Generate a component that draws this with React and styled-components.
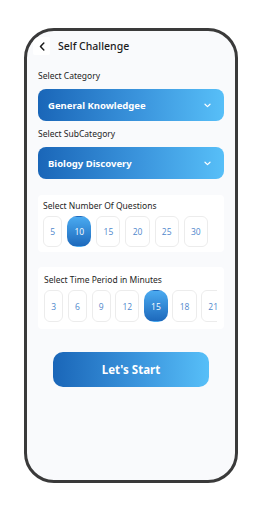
import React from 'react'
import styled, { createGlobalStyle } from 'styled-components'

const Global = createGlobalStyle`
  body {
    margin: 0;
    background: #ffffff;
    font-family: "Noto Sans", "Open Sans", sans-serif;
  }
`

const Phone = styled.div`
  width: 214px;
  height: 455px;
  box-sizing: border-box;
  margin: 28px 0 0 24px;
  border: 3px solid #3a3a3a;
  border-radius: 30px;
  background: #f9fafc;
  overflow: hidden;
  display: flex;
  flex-direction: column;
`

const Header = styled.div`
  display: flex;
  align-items: center;
  padding: 6px 0 0 6px;
`

const BackBtn = styled.div`
  width: 17px;
  height: 18px;
  background: #ffffff;
  border-radius: 2px;
  display: flex;
  align-items: center;
  justify-content: center;
`

const Title = styled.div`
  margin-left: 8px;
  font-size: 10.5px;
  font-weight: 500;
  color: #1c1c1c;
`

const Body = styled.div`
  padding: 0 11px;
  display: flex;
  flex-direction: column;
`

const Label = styled.div`
  margin-top: ${p => p.top}px;
  font-size: 8.5px;
  line-height: 12px;
  color: #1e1e1e;
`

const Dropdown = styled.div`
  margin-top: 7px;
  height: 32px;
  border-radius: 8px;
  background: linear-gradient(90deg, #1a66b8 0%, #3b95dd 55%, #57bff8 100%);
  display: flex;
  align-items: center;
  justify-content: space-between;
  padding: 0 13px 0 10px;
  color: #fff;
  font-size: 9.5px;
  font-weight: 700;
`

const Card = styled.div`
  margin-top: ${p => p.top}px;
  background: #ffffff;
  border-radius: 4px;
  padding: ${p => p.pad};
`

const CardTitle = styled.div`
  font-size: 8.5px;
  line-height: 12px;
  color: #1e1e1e;
`

const ChipRow = styled.div`
  margin-top: 4px;
  display: flex;
  gap: ${p => p.gap}px;
  overflow: hidden;
`

const Chip = styled.div`
  flex: none;
  height: ${p => p.h}px;
  box-sizing: border-box;
  padding: 0 6.2px;
  display: flex;
  align-items: center;
  justify-content: center;
  font-family: "Open Sans", sans-serif;
  font-size: 8.5px;
  border-radius: ${p => (p.active ? 10 : 6)}px;
  border: 1px solid ${p => (p.active ? 'transparent' : '#ececec')};
  background: ${p => (p.active ? 'linear-gradient(180deg, #4aaaf0 0%, #1d69bc 100%)' : '#ffffff')};
  color: ${p => (p.active ? '#ffffff' : '#4f87cc')};
`

const StartBtn = styled.div`
  margin: 23px auto 0;
  width: 156px;
  height: 35px;
  border-radius: 10px;
  background: linear-gradient(90deg, #1a66b8 0%, #3b95dd 55%, #57bff8 100%);
  display: flex;
  align-items: center;
  justify-content: center;
  color: #fff;
  font-size: 11.5px;
  font-weight: 700;
`

const Chevron = () => (
  <svg width="7" height="5" viewBox="0 0 7 5">
    <path d="M1 1.2 L3.5 3.6 L6 1.2" fill="none" stroke="#fff" strokeWidth="1.2" strokeLinecap="round" strokeLinejoin="round" />
  </svg>
)

const questions = [5, 10, 15, 20, 25, 30]
const minutes = [3, 6, 9, 12, 15, 18, 21]

export default function App() {
  return (
    <>
      <Global />
      <Phone>
        <Header>
          <BackBtn>
            <svg width="6" height="9" viewBox="0 0 6 9">
              <path d="M4.8 1 L1.5 4.5 L4.8 8" fill="none" stroke="#1c1c1c" strokeWidth="1.5" strokeLinecap="round" strokeLinejoin="round" />
            </svg>
          </BackBtn>
          <Title>Self Challenge</Title>
        </Header>
        <Body>
          <Label top={15}>Select Category</Label>
          <Dropdown>
            <span>General Knowledgee</span>
            <Chevron />
          </Dropdown>
          <Label top={7}>Select SubCategory</Label>
          <Dropdown>
            <span>Biology Discovery</span>
            <Chevron />
          </Dropdown>
          <Card top={16} pad="5px 5px">
            <CardTitle>Select Number Of Questions</CardTitle>
            <ChipRow gap={5}>
              {questions.map(q => (
                <Chip key={q} h={31} active={q === 10}>{q}</Chip>
              ))}
            </ChipRow>
          </Card>
          <Card top={15} pad="7px 7px 7px 6px">
            <CardTitle>Select Time Period in Minutes</CardTitle>
            <ChipRow gap={4.5}>
              {minutes.map(m => (
                <Chip key={m} h={32} active={m === 15}>{m}</Chip>
              ))}
            </ChipRow>
          </Card>
          <StartBtn>Let's Start</StartBtn>
        </Body>
      </Phone>
    </>
  )
}
